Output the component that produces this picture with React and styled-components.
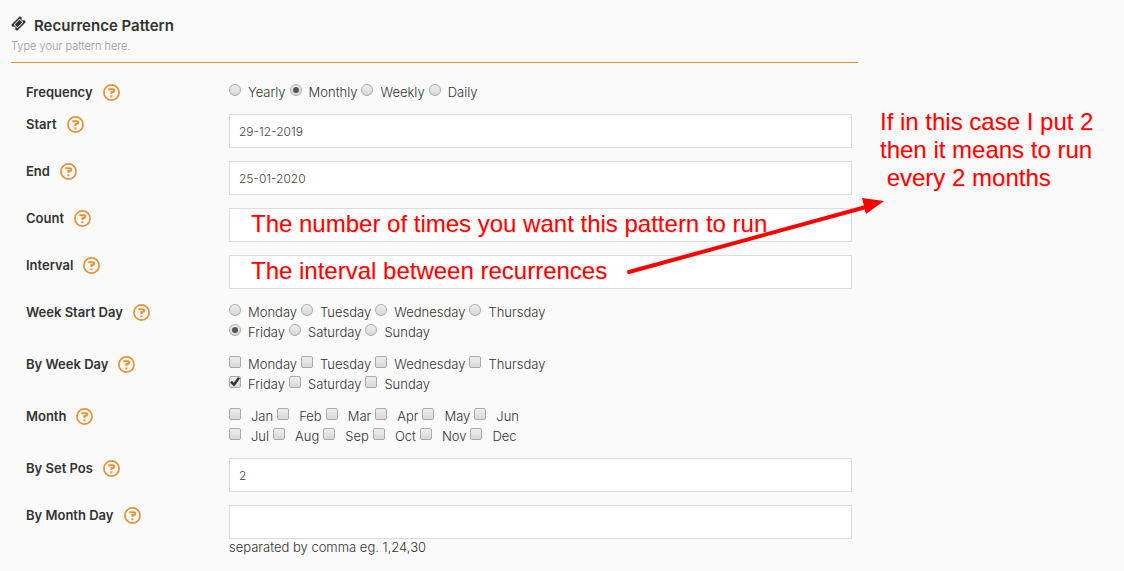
import { useId } from 'react';
import styled, { createGlobalStyle } from 'styled-components';

const GlobalStyle = createGlobalStyle`
  *,
  *::before,
  *::after {
    box-sizing: border-box;
  }

  body {
    margin: 0;
    background-color: #fafafa;
    color: #333;
    font-family: Inter, "Open Sans", sans-serif;
    font-size: 13px;
    font-weight: 300;
    line-height: 20px;
  }
`;

const Page = styled.main`
  display: flex;
  align-items: flex-start;
  padding: 16px 0 16px 11px;
`;

const Form = styled.form`
  flex: 1;
  min-width: 0;
`;

const SectionHeader = styled.header`
  padding-bottom: 6px;
  margin-bottom: 19px;
  border-bottom: 1px solid #e0922a;

  h2 {
    display: flex;
    align-items: flex-start;
    gap: 8px;
    margin: 0;
    color: #333;
    font-size: 15px;
    font-weight: 600;
  }

  p {
    margin: 0;
    color: #999;
    font-size: 11px;
  }
`;

const Row = styled.div`
  display: grid;
  grid-template-columns: 203px minmax(0, 1fr);
  padding: 0 6px 0 15px;
  margin-bottom: ${({ $choices }) => ($choices ? '12px' : '13px')};
`;

const RowLabel = styled.div`
  display: flex;
  align-items: center;
  align-self: start;
  gap: 10px;
  color: #333;
  font-weight: 600;
`;

const HelpButton = styled.button`
  display: flex;
  padding: 0;
  border: 0;
  background: none;
  color: #e69138;
  cursor: pointer;
`;

const Field = styled.div`
  position: relative;
`;

const TextInput = styled.input`
  display: block;
  width: 100%;
  height: 34px;
  padding: 0 9px;
  border: 1px solid #dcdcdc;
  border-radius: 0;
  background-color: #fff;
  color: #444;
  font: inherit;
  font-size: 12px;
`;

const Hint = styled.p`
  margin: 0;
  line-height: 16px;
`;

const ChoiceLine = styled.div`
  display: flex;
  flex-wrap: wrap;
  column-gap: 4px;
`;

const Choice = styled.label`
  display: flex;
  align-items: flex-start;
  gap: ${({ $wide }) => ($wide ? '10px' : '7px')};
`;

const Tick = styled.input`
  appearance: none;
  display: grid;
  place-items: center;
  flex: none;
  width: 12px;
  height: 12px;
  margin: 2px 0 0;
  border: 1px solid #aaa;
  border-radius: ${({ type }) => (type === 'radio' ? '50%' : '2px')};
  background: linear-gradient(#eee, #d8d8d8);

  &[type='radio']:checked::before {
    content: '';
    width: 6px;
    height: 6px;
    border-radius: 50%;
    background-color: #555;
  }

  &[type='checkbox']:checked::before {
    content: '';
    width: 10px;
    height: 10px;
    background-color: #333;
    clip-path: polygon(0 55%, 20% 38%, 38% 58%, 80% 0, 100% 16%, 42% 95%);
  }
`;

const Note = styled.div`
  color: #f00;
  font-family: "Liberation Sans", Arial, sans-serif;
  font-size: 24px;
  font-weight: 400;
  line-height: 28px;
  white-space: pre;
  text-shadow: 1px 1px 1px rgba(0, 0, 0, 0.12);
`;

const FieldNote = styled(Note)`
  position: absolute;
  top: 2px;
  left: 22px;
  pointer-events: none;
`;

const SideNote = styled.aside`
  flex: none;
  width: 266px;
  padding: 92px 0 0 22px;
`;

const Arrow = styled.svg`
  position: absolute;
  top: -60px;
  right: -32px;
  z-index: 1;
  pointer-events: none;
`;

const TicketIcon = () => (
  <svg width="15" height="15" viewBox="0 0 1792 1792" fill="currentColor" aria-hidden="true">
    <path d="M1024 452l316 316-572 572-316-316zm-211 979l618-618q19-19 19-45t-19-45l-362-362q-18-18-45-18t-45 18l-618 618q-19 19-19 45t19 45l362 362q18 18 45 18t45-18zm889-637l-907 908q-37 37-90.5 37t-90.5-37l-126-126q56-56 56-136t-56-136-136-56-136 56l-125-126q-37-37-37-90.5t37-90.5l907-906q37-37 90.5-37t90.5 37l125 125q-56 56-56 136t56 136 136 56 136-56l126 125q37 37 37 90.5t-37 90.5z" />
  </svg>
);

const HelpIcon = () => (
  <svg width="17" height="17" viewBox="0 0 17 17" fill="none" stroke="currentColor" aria-hidden="true">
    <circle cx="8.5" cy="8.5" r="7.6" strokeWidth="1.7" />
    <path d="M5.3 5.3H9.8Q11.5 5.3 11.3 6.5Q11.1 7.9 9.4 8L8.5 8.1V10" strokeWidth="2" />
    <path d="M7.3 12.3H9.5" strokeWidth="1.8" />
  </svg>
);

const DAYS = [
  ['Monday', 'Tuesday', 'Wednesday', 'Thursday'],
  ['Friday', 'Saturday', 'Sunday'],
];

const MONTHS = [
  ['Jan', 'Feb', 'Mar', 'Apr', 'May', 'Jun'],
  ['Jul', 'Aug', 'Sep', 'Oct', 'Nov', 'Dec'],
];

const Help = ({ label }) => (
  <HelpButton type="button" aria-label={`Help: ${label}`}>
    <HelpIcon />
  </HelpButton>
);

const TextRow = ({
  label, value = '', hint, children,
}) => {
  const id = useId();

  return (
    <Row>
      <RowLabel>
        <label htmlFor={id}>{label}</label>
        <Help label={label} />
      </RowLabel>
      <Field>
        <TextInput id={id} type="text" defaultValue={value} />
        {hint && <Hint>{hint}</Hint>}
        {children}
      </Field>
    </Row>
  );
};

const ChoiceRow = ({
  label, type, lines, selected, wide,
}) => {
  const id = useId();

  return (
    <Row $choices role="group" aria-labelledby={id}>
      <RowLabel>
        <span id={id}>{label}</span>
        <Help label={label} />
      </RowLabel>
      <div>
        {lines.map((line) => (
          <ChoiceLine key={line[0]}>
            {line.map((option) => (
              <Choice key={option} $wide={wide}>
                <Tick type={type} name={label} defaultChecked={option === selected} />
                {option}
              </Choice>
            ))}
          </ChoiceLine>
        ))}
      </div>
    </Row>
  );
};

const App = () => (
  <>
    <GlobalStyle />
    <Page>
      <Form>
        <SectionHeader>
          <h2>
            <TicketIcon />
            Recurrence Pattern
          </h2>
          <p>Type your pattern here.</p>
        </SectionHeader>
        <ChoiceRow
          label="Frequency"
          type="radio"
          lines={[['Yearly', 'Monthly', 'Weekly', 'Daily']]}
          selected="Monthly"
        />
        <TextRow label="Start" value="29-12-2019" />
        <TextRow label="End" value="25-01-2020" />
        <TextRow label="Count">
          <FieldNote>The number of times you want this pattern to run</FieldNote>
        </TextRow>
        <TextRow label="Interval">
          <FieldNote>The interval between recurrences</FieldNote>
          <Arrow width="260" height="84" viewBox="0 0 260 84" aria-hidden="true">
            <path d="M5 77L242 12" stroke="#f00" strokeWidth="4" strokeLinecap="round" />
            <path d="M238 3L260 6L242 19Z" fill="#f00" />
          </Arrow>
        </TextRow>
        <ChoiceRow label="Week Start Day" type="radio" lines={DAYS} selected="Friday" />
        <ChoiceRow label="By Week Day" type="checkbox" lines={DAYS} selected="Friday" />
        <ChoiceRow label="Month" type="checkbox" lines={MONTHS} wide />
        <TextRow label="By Set Pos" value="2" />
        <TextRow label="By Month Day" hint="separated by comma eg. 1,24,30" />
      </Form>
      <SideNote>
        <Note>{'If in this case I put 2\nthen it means to run\n every 2 months'}</Note>
      </SideNote>
    </Page>
  </>
);

export default App;
